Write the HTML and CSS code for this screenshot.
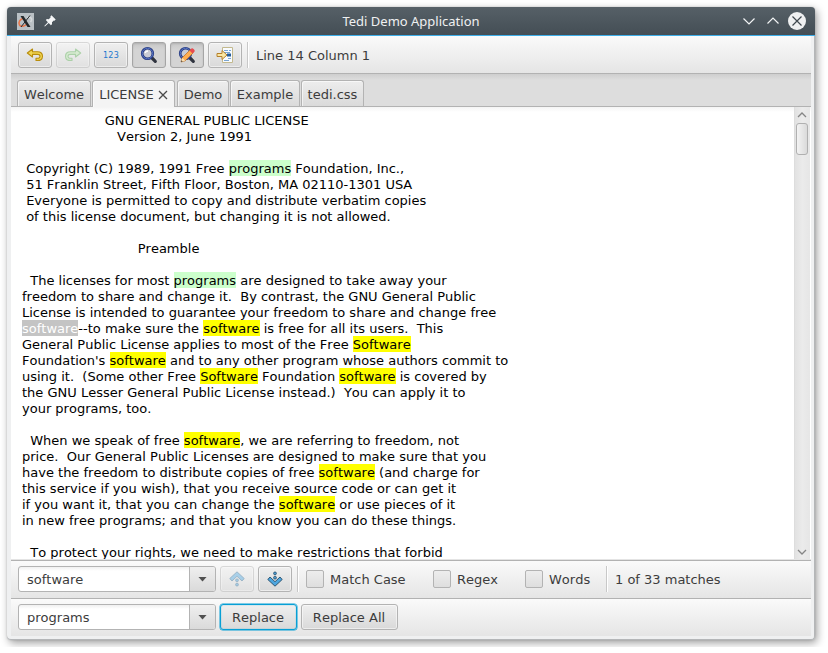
FILE: index.html
```html
<!DOCTYPE html>
<html lang="en">
<head>
<meta charset="utf-8">
<title>Tedi Demo Application</title>
<link rel="stylesheet" href="styles.css">
</head>
<body>
<div class="window">
  <header class="titlebar">
    <svg class="app-icon" width="17" height="17" viewBox="0 0 17 17"><rect width="17" height="17" fill="#b9c0c4"/><path d="M7 5C3 6 1 9 2.500 12C4 14.500 8 13 10 11" fill="none" stroke="#e8764a" stroke-width="1.500"/><path d="M10 4.500C14 3.500 16 6 13.500 9" fill="none" stroke="#d6dadc" stroke-width="1.500"/><path d="M3.500 3H6.500L13.500 14H10.500Z" fill="#24282b"/><path d="M13 2.500L4 14" stroke="#24282b" stroke-width="1"/></svg>
    <svg class="pin" width="12" height="12" viewBox="0 0 12 12"><path d="M7.500 .3L11.700 4.500L10.500 5.700L9.800 5.400L8 7.200L8 9.200L6.900 10.200L4.700 8L.9 11.600L.3 11L3.900 7.200L1.800 5.100L2.900 4.100L4.800 4.200L6.700 2.300L6.300 1.500Z" fill="#f4f6f7"/></svg>
    <h1 class="title">Tedi Demo Application</h1>
    <svg class="window-controls" width="64" height="20" viewBox="0 0 64 20"><path d="M1.500 7.500L7 13L12.500 7.500M25.500 12.500L31 7L36.500 12.500" fill="none" stroke="#f1f3f4" stroke-width="1.200"/><circle cx="55" cy="10" r="9" fill="#eff0f1"/><path d="M50.500 5.500L59.500 14.500M59.500 5.500L50.500 14.500" stroke="#3f484e" stroke-width="1.200"/></svg>
  </header>
  <main class="content">
    <div class="bar toolbar">
      <button class="button icon-button" aria-label="Undo"><svg width="18" height="16" viewBox="0 0 18 16"><path d="M1.300 6L6.500 2V4.800H11.500C14.800 4.800 16.500 6.500 16.500 9.300C16.500 12.500 14.500 13.800 10 13.400V11.200C13 11.500 14 10.800 14 9.300C14 8 13 7.400 11.500 7.400H6.500V10Z" fill="#f0d552" stroke="#b98d0c" stroke-width="1.100" stroke-linejoin="round"/></svg></button>
      <button class="button icon-button" aria-label="Redo" disabled><svg class="flipped" width="18" height="16" viewBox="0 0 18 16"><path d="M1.300 6L6.500 2V4.800H11.500C14.800 4.800 16.500 6.500 16.500 9.300C16.500 12.500 14.500 13.800 10 13.400V11.200C13 11.500 14 10.800 14 9.300C14 8 13 7.400 11.500 7.400H6.500V10Z" fill="#b9e6ac" stroke="#5eae58" stroke-width="1.100" stroke-linejoin="round"/></svg></button>
      <button class="button icon-button numbers">123</button>
      <button class="button icon-button pressed" aria-label="Find"><svg width="18" height="18" viewBox="0 0 18 18"><path d="M12 12L15.300 15.300" stroke="#30343f" stroke-width="3.200" stroke-linecap="round"/><circle cx="7.500" cy="7.500" r="5.300" fill="#c9cbd4" stroke="#263a80" stroke-width="2.600"/><circle cx="7.500" cy="7.500" r="5.300" fill="none" stroke="#5b78c8" stroke-width="1"/><path d="M5 7C5.500 5.500 6.500 5 8 5" fill="none" stroke="#fff" stroke-width="1.300"/></svg></button>
      <button class="button icon-button pressed" aria-label="Find and replace"><svg width="18" height="18" viewBox="0 0 18 18"><path d="M12 12L15.300 15.300" stroke="#30343f" stroke-width="3.200" stroke-linecap="round"/><circle cx="7.500" cy="7.500" r="5.300" fill="#c9cbd4" stroke="#263a80" stroke-width="2.600"/><circle cx="7.500" cy="7.500" r="5.300" fill="none" stroke="#5b78c8" stroke-width="1"/><path d="M3 16L4.200 11.800L12.300 3.700L15.300 6.700L7.200 14.800Z" fill="#ffad4f" stroke="#b9681f" stroke-width=".7"/><path d="M11.500 4.500L13.500 2.500C14.500 1.500 17.500 4.500 16.500 5.500L14.500 7.500Z" fill="#e84b50"/><path d="M3 16L4.200 11.800L7.200 14.800Z" fill="#f8e0b5"/><path d="M3 16L3.500 14.300L4.700 15.500Z" fill="#343434"/></svg></button>
      <button class="button icon-button" aria-label="Go to line"><svg width="18" height="16" viewBox="0 0 18 16"><path d="M6.500 .5H16.500V15.500H6.500Z" fill="#f8fbfe" stroke="#c3b98e"/><path d="M8 3.500H12M13 3.500H15M8 5.500H14M12 11.500H15M8 13.500H13" stroke="#7ba5d1"/><path d="M11 6.500H15V9.500H11Z" fill="#255e9d"/><path d="M1 6.500H6V3.500L11 8L6 12.500V9.500H1Z" fill="#fbe7a3" stroke="#b5802c" stroke-linejoin="round"/></svg></button>
      <span class="separator"></span>
      <span class="position">Line 14 Column 1</span>
    </div>
    <nav class="tabs">
      <span class="tab welcome">Welcome</span>
      <span class="tab license active">LICENSE<svg width="10" height="10" viewBox="0 0 10 10"><path d="M1 1L9 9M9 1L1 9" stroke="#4a4a4a" stroke-width="1.300"/></svg></span>
      <span class="tab demo">Demo</span>
      <span class="tab example">Example</span>
      <span class="tab css">tedi.css</span>
    </nav>
    <section class="editor">
<pre class="text">                    GNU GENERAL PUBLIC LICENSE
                       Version 2, June 1991

 Copyright (C) 1989, 1991 Free <mark class="replacement">programs</mark> Foundation, Inc.,
 51 Franklin Street, Fifth Floor, Boston, MA 02110-1301 USA
 Everyone is permitted to copy and distribute verbatim copies
 of this license document, but changing it is not allowed.

                            Preamble

  The licenses for most <mark class="replacement">programs</mark> are designed to take away your
freedom to share and change it.  By contrast, the GNU General Public
License is intended to guarantee your freedom to share and change free
<mark class="selected">software</mark>--to make sure the <mark>software</mark> is free for all its users.  This
General Public License applies to most of the Free <mark>Software</mark>
Foundation's <mark>software</mark> and to any other program whose authors commit to
using it.  (Some other Free <mark>Software</mark> Foundation <mark>software</mark> is covered by
the GNU Lesser General Public License instead.)  You can apply it to
your programs, too.

  When we speak of free <mark>software</mark>, we are referring to freedom, not
price.  Our General Public Licenses are designed to make sure that you
have the freedom to distribute copies of free <mark>software</mark> (and charge for
this service if you wish), that you receive source code or can get it
if you want it, that you can change the <mark>software</mark> or use pieces of it
in new free programs; and that you know you can do these things.

  To protect your rights, we need to make restrictions that forbid</pre>
      <div class="scrollbar">
        <svg width="10" height="6" viewBox="0 0 10 6"><path d="M1 5L5 1L9 5" fill="none" stroke="#858585" stroke-width="1.300"/></svg>
        <span class="thumb"></span>
        <svg width="10" height="6" viewBox="0 0 10 6"><path d="M1 1L5 5L9 1" fill="none" stroke="#858585" stroke-width="1.300"/></svg>
      </div>
    </section>
    <div class="bar find">
      <div class="combo"><span class="value">software</span><span class="arrow"></span></div>
      <button class="button icon-button" aria-label="Previous match" disabled><svg width="16" height="16" viewBox="0 0 16 16"><path d="M.8 7.500L8 .8L15.200 7.500L13 10L8 5.300L3 10Z" fill="#4ea6df" stroke="#2c6790" stroke-width=".9" stroke-linejoin="round"/><rect x="6.700" y="8" width="2.600" height="2.600" rx="1" fill="#4ea6df" stroke="#2c6790" stroke-width=".9"/><rect x="6.700" y="12.300" width="2.600" height="2.600" rx="1" fill="#4ea6df" stroke="#2c6790" stroke-width=".9"/></svg></button>
      <button class="button icon-button" aria-label="Next match"><svg width="16" height="16" viewBox="0 0 16 16"><path d="M.8 8.500L8 15.200L15.200 8.500L13 6L8 10.700L3 6Z" fill="#4ea6df" stroke="#284c66" stroke-width=".9" stroke-linejoin="round"/><rect x="6.700" y="5.400" width="2.600" height="2.600" rx="1" fill="#4ea6df" stroke="#284c66" stroke-width=".9"/><rect x="6.700" y="1.100" width="2.600" height="2.600" rx="1" fill="#4ea6df" stroke="#284c66" stroke-width=".9"/></svg></button>
      <span class="separator"></span>
      <span class="check match"><i class="box"></i><span class="label">Match Case</span></span>
      <span class="check regex"><i class="box"></i><span class="label">Regex</span></span>
      <span class="check words"><i class="box"></i><span class="label">Words</span></span>
      <span class="separator"></span>
      <span class="position">1 of 33 matches</span>
    </div>
    <div class="bar replace">
      <div class="combo"><span class="value">programs</span><span class="arrow"></span></div>
      <button class="button focused">Replace</button>
      <button class="button replace-all">Replace All</button>
    </div>
  </main>
</div>
</body>
</html>
```
FILE: styles.css
```css
* { box-sizing: border-box; }

body {
  margin: 0;
  background: #fff;
  color: #3c3c3c;
  font: 13px/16px "DejaVu Sans", sans-serif;
  font-kerning: none;
}

.window {
  width: 808px;
  height: 633px;
  margin: 7px;
  overflow: hidden;
  border-radius: 4px;
  background: #eff0f1;
  box-shadow: inset 0 -1px #b4b6b8, inset -1px 0 #b4b6b8, 0 0 2px rgba(0, 0, 0, .18), 2px 3px 8px rgba(0, 0, 0, .38);
}

.titlebar {
  display: flex;
  align-items: center;
  height: 29px;
  padding: 0 8px 0 10px;
  border-bottom: 1px solid #3daee9;
  background: linear-gradient(#566067, #444e55);
}

.pin { margin-left: 10px; }

.title {
  flex: 1;
  margin: 0 0 0 16px;
  padding-left: 8px;
  color: #eff0f1;
  font: 13px/18px "Noto Sans", sans-serif;
  text-align: center;
}

.window-controls { margin-right: 1px; }

.content {
  width: 800px;
  height: 600px;
  margin-left: 4px;
  background: #f4f4f4;
}

.bar {
  display: flex;
  align-items: center;
  gap: 4px;
  height: 38px;
  padding: 0 7px;
  background: linear-gradient(#fafafa, #e5e5e5);
}

.toolbar {
  padding-top: 1px;
  border-bottom: 1px solid #b2b2b2;
}

.find, .replace {
  padding-bottom: 1px;
  border-top: 1px solid #b2b2b2;
}

.button {
  display: flex;
  align-items: center;
  justify-content: center;
  height: 26px;
  padding: 0;
  border: 1px solid #b3b3b3;
  border-radius: 3px;
  background: linear-gradient(#efefef, #d9d9d9);
  box-shadow: inset 0 0 0 1px rgba(255, 255, 255, .5);
  color: #3c3c3c;
  font: inherit;
  font-kerning: none;
}

.icon-button { flex: none; width: 34px; }

.button:disabled { opacity: .45; }

.button.pressed {
  border-color: #a5a5a5;
  background: linear-gradient(#c8c8c8, #d4d4d4 30%);
  box-shadow: inset 0 1px 2px rgba(0, 0, 0, .12);
}

.button.numbers {
  padding-top: 2px;
  color: #1b78ce;
  font-size: 8px;
  letter-spacing: .3px;
}

.flipped { transform: scaleX(-1); }

.separator {
  width: 2px;
  height: 26px;
  margin-left: 1px;
  border-left: 1px solid #c8c8c8;
  background: #fff;
}

.label { padding-top: 2px; }

.position {
  margin-left: 3px;
  padding-top: 2px;
  white-space: nowrap;
}

.tabs {
  display: flex;
  align-items: flex-end;
  gap: 1px;
  height: 33px;
  padding-left: 6px;
  border-bottom: 1px solid #b2b2b2;
  background: linear-gradient(#cecece, #ddd 6px);
}

.tab {
  display: flex;
  align-items: center;
  justify-content: center;
  height: 26px;
  padding-top: 2px;
  border: 1px solid #b3b3b3;
  border-bottom: 0;
  border-radius: 3px 3px 0 0;
  background: linear-gradient(#ededed, #dadada);
  box-shadow: inset 1px 1px rgba(255, 255, 255, .6);
}

.welcome { width: 74px; }
.license { gap: 4px; width: 83px; }
.demo { width: 52px; margin-left: 1px; }
.example { width: 70px; }
.css { width: 63px; }

.tab.active {
  height: 27px;
  margin-bottom: -1px;
  padding-bottom: 1px;
  background: #f4f4f4;
}

.editor {
  display: flex;
  height: 453px;
  padding-left: 1px;
  border-bottom: 1px solid #e4e4e4;
  background: linear-gradient(#f4f4f4, #fff 5px);
}

.text {
  flex: 1;
  margin: 0;
  padding: 6px 0 0 10px;
  overflow: hidden;
  color: #000;
  font: 13px/16px "DejaVu Sans", sans-serif;
  font-kerning: none;
  white-space: pre;
}

mark {
  display: inline-block;
  height: 16px;
  margin-top: -1px;
  padding-top: 1px;
  background: #ff0;
  color: inherit;
  vertical-align: top;
}

.replacement { background: #cfc; }
.selected { background: #c4c4c4; color: #fff; }

.scrollbar {
  display: flex;
  flex-direction: column;
  align-items: center;
  width: 16px;
  margin-right: 1px;
  padding: 5px 1px 4px 0;
  border-left: 1px solid #ddd;
  background: linear-gradient(90deg, #e2e2e2, #ebebeb 50%, #e6e6e6);
}

.thumb {
  width: 12px;
  height: 32px;
  margin: 5px 0 auto;
  border: 1px solid #b0b0b0;
  border-radius: 3px;
  background: linear-gradient(90deg, #f3f3f3, #dadada);
}

.combo {
  display: flex;
  flex: none;
  width: 198px;
  height: 26px;
  border: 1px solid #b3b3b3;
  border-radius: 3px;
  background: linear-gradient(#f0f0f0, #fff 4px);
}

.value { flex: 1; padding: 5px 8px 3px; }

.arrow {
  display: flex;
  align-items: center;
  justify-content: center;
  width: 26px;
  border-left: 1px solid #b3b3b3;
  border-radius: 0 2px 2px 0;
  background: linear-gradient(#efefef, #dadada);
}

.arrow::before {
  width: 9px;
  height: 5px;
  background: #505050;
  clip-path: polygon(0 0, 100% 0, 50% 100%);
  content: "";
}

.check {
  display: flex;
  align-items: center;
  gap: 6px;
  margin-left: 3px;
  white-space: nowrap;
}

.match { width: 123px; }
.regex { width: 85px; margin-left: 0; }
.words { width: 76px; margin-left: 3px; }

.box {
  width: 18px;
  height: 18px;
  border: 1px solid #b3b3b3;
  border-radius: 2px;
  background: linear-gradient(#ededed, #dedede);
}

.focused {
  width: 77px;
  padding: 2px 1px 0 0;
  border: 1px solid #079fd5;
  box-shadow: 0 0 0 .5px #079fd5, inset 0 0 1px #079fd5;
}

.replace-all {
  width: 97px;
  padding: 2px 1px 0 0;
}
```
